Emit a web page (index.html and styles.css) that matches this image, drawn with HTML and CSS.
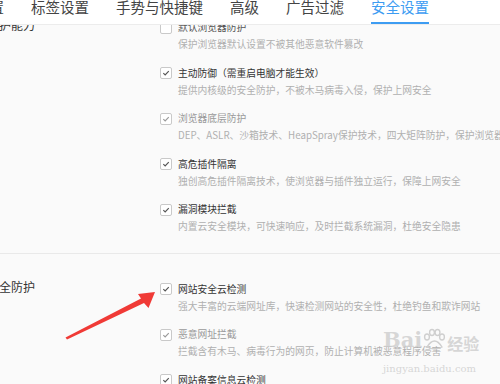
FILE: index.html
```html
<!DOCTYPE html>
<html lang="zh">
<head>
<meta charset="utf-8">
<link rel="stylesheet" href="styles.css">
</head>
<body>
<div class="page">
  <div class="nav">
    <span class="tab tab-first">基本设置</span>
    <span class="tab">标签设置</span>
    <span class="tab">手势与快捷键</span>
    <span class="tab">高级</span>
    <span class="tab">广告过滤</span>
    <span class="tab active">安全设置</span>
  </div>
  <div class="viewport">
    <div class="scroll">
      <section class="sec sec-first">
        <div class="label">防护能力</div>
        <div class="opts">
          <div class="opt">
            <span class="cb"></span>
            <div class="txt"><div class="t mid">默认浏览器防护</div><div class="d">保护浏览器默认设置不被其他恶意软件篡改</div></div>
          </div>
          <div class="opt">
            <span class="cb"><svg viewBox="0 0 12 12"><path d="M2.8 6.2 L5 8.3 L9.3 3.7"/></svg></span>
            <div class="txt"><div class="t">主动防御（需重启电脑才能生效）</div><div class="d">提供内核级的安全防护，不被木马病毒入侵，保护上网安全</div></div>
          </div>
          <div class="opt dim">
            <span class="cb"><svg viewBox="0 0 12 12"><path d="M2.8 6.2 L5 8.3 L9.3 3.7"/></svg></span>
            <div class="txt"><div class="t">浏览器底层防护</div><div class="d">DEP、ASLR、沙箱技术、HeapSpray保护技术，四大矩阵防护，保护浏览器的安全</div></div>
          </div>
          <div class="opt">
            <span class="cb"><svg viewBox="0 0 12 12"><path d="M2.8 6.2 L5 8.3 L9.3 3.7"/></svg></span>
            <div class="txt"><div class="t">高危插件隔离</div><div class="d">独创高危插件隔离技术，使浏览器与插件独立运行，保障上网安全</div></div>
          </div>
          <div class="opt">
            <span class="cb"><svg viewBox="0 0 12 12"><path d="M2.8 6.2 L5 8.3 L9.3 3.7"/></svg></span>
            <div class="txt"><div class="t">漏洞模块拦截</div><div class="d">内置云安全模块，可快速响应，及时拦截系统漏洞，杜绝安全隐患</div></div>
          </div>
        </div>
      </section>
      <section class="sec">
        <div class="label">安全防护</div>
        <div class="opts">
          <div class="opt">
            <span class="cb"><svg viewBox="0 0 12 12"><path d="M2.8 6.2 L5 8.3 L9.3 3.7"/></svg></span>
            <div class="txt"><div class="t">网站安全云检测</div><div class="d">强大丰富的云端网址库，快速检测网站的安全性，杜绝钓鱼和欺诈网站</div></div>
          </div>
          <div class="opt dim">
            <span class="cb"><svg viewBox="0 0 12 12"><path d="M2.8 6.2 L5 8.3 L9.3 3.7"/></svg></span>
            <div class="txt"><div class="t">恶意网址拦截</div><div class="d">拦截含有木马、病毒行为的网页，防止计算机被恶意程序侵害</div></div>
          </div>
          <div class="opt">
            <span class="cb"><svg viewBox="0 0 12 12"><path d="M2.8 6.2 L5 8.3 L9.3 3.7"/></svg></span>
            <div class="txt"><div class="t">网站备案信息云检测</div><div class="d">检测网站的备案信息</div></div>
          </div>
        </div>
      </section>
    </div>
  </div>

  <svg class="arrow" viewBox="0 0 500 384" width="500" height="384">
    <polygon points="65.5,337.5 141,298.5 138,294 155,292 148.5,308 144,303 67,339.5" fill="#f03a36"/>
  </svg>

  <div class="watermark">
    <div class="wm-top"><span class="wm-bai">Bai</span><span class="wm-paw">
      <svg viewBox="0 0 24 24" width="24" height="24"><g fill="none" stroke="#cfcfcf" stroke-width="1.4"><ellipse cx="5" cy="9" rx="2.4" ry="3"/><ellipse cx="10" cy="4.5" rx="2.4" ry="3"/><ellipse cx="15.5" cy="4.5" rx="2.4" ry="3"/><ellipse cx="20" cy="9" rx="2.4" ry="3"/><path d="M5 19 Q12.5 7 20 19 Q12.5 23 5 19Z"/></g></svg>
    </span><span class="wm-jy">经验</span></div>
    <div class="wm-url">jingyan.baidu.com</div>
  </div>
</div>
</body>
</html>
```

FILE: styles.css
```css
* { box-sizing: border-box; }
html, body { margin: 0; padding: 0; }
body {
  width: 500px;
  height: 384px;
  overflow: hidden;
  font-family: "Noto Sans CJK SC", "Noto Sans", sans-serif;
  background: #fafafa;
}
.page {
  position: relative;
  width: 500px;
  height: 384px;
  overflow: hidden;
  display: flex;
  flex-direction: column;
}
.nav {
  flex: none;
  height: 25px;
  background: #fff;
  border-bottom: 1px solid #ececec;
  display: flex;
  gap: 27px;
  white-space: nowrap;
  position: relative;
  z-index: 2;
}
.tab {
  font-size: 14.5px;
  line-height: 14px;
  height: 24px;
  color: #444;
}
.tab-first { margin-left: -54px; }
.tab.active {
  color: #3d9cf2;
  border-bottom: 2px solid #3d9cf2;
}
.viewport {
  flex: 1;
  overflow: hidden;
  position: relative;
  z-index: 1;
}
.scroll {
  margin-top: -6px;
}
.sec {
  display: flex;
  padding-bottom: 18px;
  border-bottom: 1px solid #e9e9e9;
}
.sec + .sec {
  padding-top: 26.5px;
  border-bottom: none;
}
.label {
  flex: none;
  width: 160px;
  margin-left: -13px;
  margin-right: 13px;
  font-size: 12px;
  line-height: 17px;
  margin-top: -3px;
  color: #333;
  white-space: nowrap;
}
.opts {
  display: flex;
  flex-direction: column;
  gap: 11.5px;
  white-space: nowrap;
}
.opt {
  display: flex;
  gap: 6px;
}
.cb {
  flex: none;
  width: 12px;
  height: 12px;
  margin-top: 2.5px;
  border: 1px solid #c9c9c9;
  border-radius: 2px;
  background: #fff;
  display: flex;
}
.cb svg {
  width: 10px;
  height: 10px;
  fill: none;
  stroke: #555;
  stroke-width: 1.4;
}
.t {
  font-size: 9.75px;
  line-height: 17px;
  color: #333;
}
.t.mid { color: #555; }
.d {
  font-size: 9.75px;
  line-height: 17px;
  color: #b0b0b0;
}
.dim .t { color: #999; }
.dim .cb svg { stroke: #9a9a9a; }
.arrow {
  position: absolute;
  left: 0;
  top: 0;
  z-index: 3;
  pointer-events: none;
}
.watermark {
  position: absolute;
  left: 383px;
  top: 324px;
  z-index: 3;
  color: rgba(205, 205, 205, 0.8);
  pointer-events: none;
  white-space: nowrap;
}
.wm-top {
  display: flex;
  align-items: center;
  font-family: "DejaVu Serif", serif;
  font-size: 21px;
  line-height: 26px;
  font-weight: bold;
}
.wm-paw { display: flex; margin: 0 1px 0 0; }
.wm-jy { font-family: "Noto Sans CJK SC", sans-serif; font-size: 16px; font-weight: bold; margin-top: 6px; }
.wm-url {
  font-family: "DejaVu Serif", serif;
  font-size: 10px;
  line-height: 12px;
  margin-top: 7px;
}
```
